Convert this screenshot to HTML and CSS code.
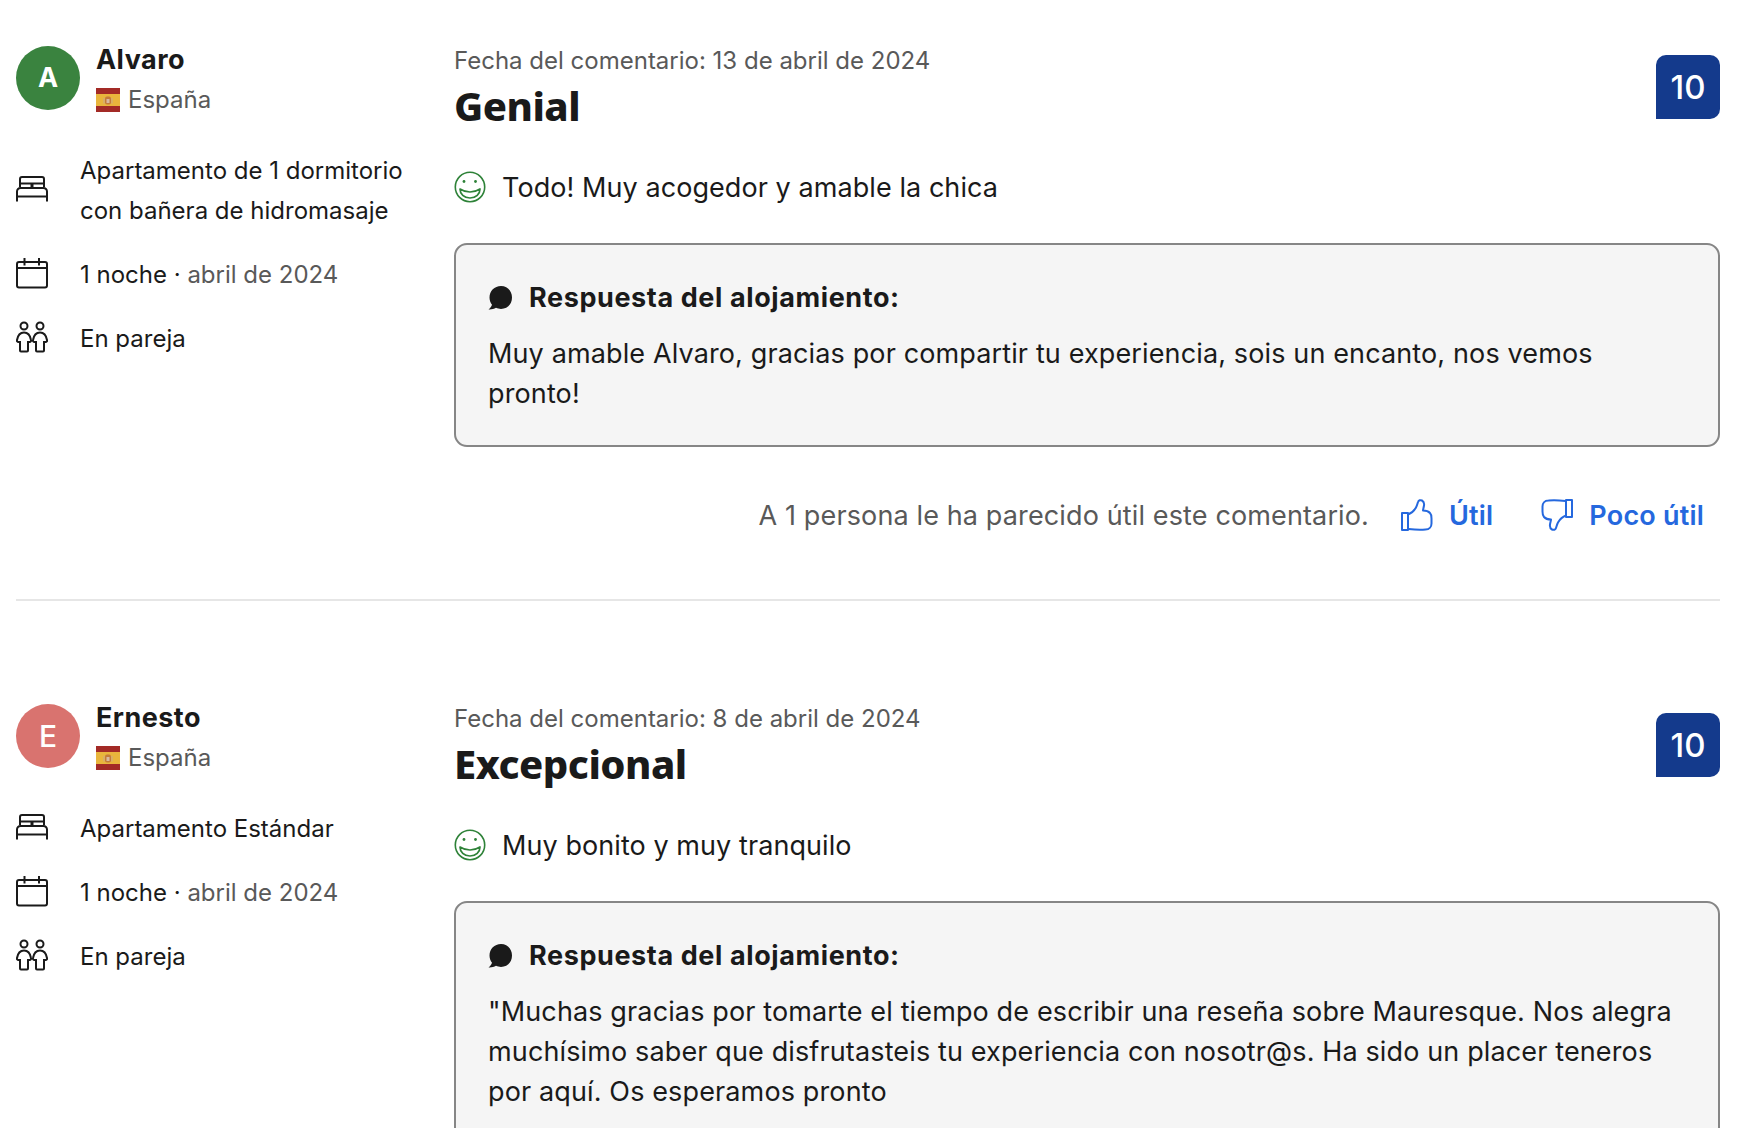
FILE: index.html
```html
<!DOCTYPE html>
<html lang="es">
  <head>
    <meta charset="UTF-8" />
    <meta name="viewport" content="width=device-width, initial-scale=1.0" />
    <title>Comentarios</title>
    <link rel="stylesheet" href="styles.css">
  </head>
  <body>
    <svg class="defs" width="0" height="0">
      <defs>
        <g id="flag-es">
          <rect width="24" height="24" fill="#a32a26" />
          <rect y="6" width="24" height="12" fill="#e9b53c" />
          <rect x="9" y="8.500" width="6" height="8" rx="2" fill="#c47a3a" />
          <rect x="10.500" y="11" width="3" height="4" fill="#d9b9a0" />
          <rect x="7.500" y="10" width="1" height="5.500" fill="#c9a98a" />
          <rect x="15.500" y="10" width="1" height="5.500" fill="#c9a98a" />
        </g>
        <g id="icon-bed" fill="none" stroke="currentColor" stroke-width="2">
          <path d="M4 14V6a2 2 0 0 1 2-2h20a2 2 0 0 1 2 2v8" />
          <path d="M4 10.500h11.500v3.500M28 10.500H16.500v3.500" />
          <path d="M1 28.500V18.500a3.500 3.500 0 0 1 3.500-3.500h23a3.500 3.500 0 0 1 3.500 3.500v10" />
          <path d="M1 23.500h30" />
        </g>
        <g id="icon-calendar" fill="none" stroke="currentColor" stroke-width="2">
          <rect x="1" y="5" width="30" height="25.500" rx="2" />
          <path d="M1 11h30M8.500 1v7.500M23 1v7.500" />
        </g>
        <g id="icon-people" fill="none" stroke="currentColor" stroke-width="2">
          <circle cx="8" cy="5" r="3.500" />
          <circle cx="24" cy="5" r="3.500" />
          <path d="M4 21v8.500a1 1 0 0 0 1 1h6a1 1 0 0 0 1-1V21h1.500a1.500 1.500 0 0 0 1.500-2c-.8-4.500-3-7.500-7-7.500s-6.200 3-7 7.500a1.500 1.500 0 0 0 1.500 2z" />
          <path d="M20 21v8.500a1 1 0 0 0 1 1h6a1 1 0 0 0 1-1V21h1.500a1.500 1.500 0 0 0 1.500-2c-.8-4.500-3-7.500-7-7.500s-6.200 3-7 7.500a1.500 1.500 0 0 0 1.500 2z" />
        </g>
        <g id="icon-smile" fill="none" stroke="currentColor">
          <circle cx="16" cy="16" r="14.700" stroke-width="1.600" />
          <circle cx="10" cy="10.500" r="1.400" fill="currentColor" stroke="none" />
          <circle cx="21.500" cy="10.500" r="1.400" fill="currentColor" stroke="none" />
          <path d="M6 18c6 4 14 4 20 0 0 5-4 9-10 9S6 23 6 18z" stroke-width="1.700" stroke-linejoin="round" />
        </g>
        <path id="icon-bubble" fill="currentColor" d="M13 0C6.500 0 1.500 5 1.500 11.500c0 2.800 1 5.300 2.500 7.300-.5 1.800-1.800 3.500-3.500 4.700 2.800.2 5.500-.5 7.500-1.700 1.500.7 3.300 1.200 5 1.200 6.400 0 11-5 11-11.500S19.400 0 13 0z" />
        <g id="icon-thumb" fill="none" stroke="currentColor" stroke-width="2" stroke-linejoin="round">
          <rect x="1" y="14" width="6" height="17" />
          <path d="M7 15.500c3-1 6-3.500 8-7 1-1.800 1.500-4 2-5.500.5-1.700 2.500-2.300 4-1.500 1.800 1 2.300 3 2 5-.3 2-1 4-1 5 3.500 0 5.500.8 7 2.500 1.500 1.500 1.500 3.500 1.500 5.500v5c0 3-2 6-6 6-4 .5-9 .5-17-.500" />
        </g>
      </defs>
    </svg>

    <div class="reviews">
      <article class="review">
        <aside class="side">
          <div class="user">
            <div class="avatar avatar-green">A</div>
            <div>
              <div class="user-name">Alvaro</div>
              <div class="user-country">
                <svg class="flag" viewBox="0 0 24 24"><use href="#flag-es" /></svg>
                España
              </div>
            </div>
          </div>
          <ul class="facts">
            <li>
              <svg class="fact-icon" viewBox="0 0 32 32"><use href="#icon-bed" /></svg>
              <span>Apartamento de 1 dormitorio con bañera de hidromasaje</span>
            </li>
            <li>
              <svg class="fact-icon" viewBox="0 0 32 32"><use href="#icon-calendar" /></svg>
              <span>1 noche · <span class="muted">abril de 2024</span></span>
            </li>
            <li>
              <svg class="fact-icon" viewBox="0 0 32 32"><use href="#icon-people" /></svg>
              <span>En pareja</span>
            </li>
          </ul>
        </aside>
        <div class="main">
          <div class="head">
            <div>
              <div class="date">Fecha del comentario: 13 de abril de 2024</div>
              <h3 class="title">Genial</h3>
            </div>
            <div class="score">10</div>
          </div>
          <p class="comment">
            <svg class="smile" viewBox="0 0 32 32"><use href="#icon-smile" /></svg>
            Todo! Muy acogedor y amable la chica
          </p>
          <div class="reply">
            <div class="reply-head">
              <svg class="bubble" viewBox="0 0 25 24"><use href="#icon-bubble" /></svg>
              Respuesta del alojamiento:
            </div>
            <p class="reply-text">Muy amable Alvaro, gracias por compartir tu experiencia, sois un encanto, nos vemos pronto!</p>
          </div>
          <div class="helpful">
            <span class="helpful-text">A 1 persona le ha parecido útil este comentario.</span>
            <button class="vote">
              <svg class="vote-icon" viewBox="0 0 32 32"><use href="#icon-thumb" /></svg>
              Útil
            </button>
            <button class="vote">
              <svg class="vote-icon" viewBox="0 0 32 32"><g transform="rotate(180 16 16)"><use href="#icon-thumb" /></g></svg>
              Poco útil
            </button>
          </div>
        </div>
      </article>

      <article class="review">
        <aside class="side">
          <div class="user">
            <div class="avatar avatar-red">E</div>
            <div>
              <div class="user-name">Ernesto</div>
              <div class="user-country">
                <svg class="flag" viewBox="0 0 24 24"><use href="#flag-es" /></svg>
                España
              </div>
            </div>
          </div>
          <ul class="facts">
            <li>
              <svg class="fact-icon" viewBox="0 0 32 32"><use href="#icon-bed" /></svg>
              <span>Apartamento Estándar</span>
            </li>
            <li>
              <svg class="fact-icon" viewBox="0 0 32 32"><use href="#icon-calendar" /></svg>
              <span>1 noche · <span class="muted">abril de 2024</span></span>
            </li>
            <li>
              <svg class="fact-icon" viewBox="0 0 32 32"><use href="#icon-people" /></svg>
              <span>En pareja</span>
            </li>
          </ul>
        </aside>
        <div class="main">
          <div class="head">
            <div>
              <div class="date">Fecha del comentario: 8 de abril de 2024</div>
              <h3 class="title">Excepcional</h3>
            </div>
            <div class="score">10</div>
          </div>
          <p class="comment">
            <svg class="smile" viewBox="0 0 32 32"><use href="#icon-smile" /></svg>
            Muy bonito y muy tranquilo
          </p>
          <div class="reply">
            <div class="reply-head">
              <svg class="bubble" viewBox="0 0 25 24"><use href="#icon-bubble" /></svg>
              Respuesta del alojamiento:
            </div>
            <p class="reply-text">"Muchas gracias por tomarte el tiempo de escribir una reseña sobre Mauresque. Nos alegra muchísimo saber que disfrutasteis tu experiencia con nosotr@s. Ha sido un placer teneros por aquí. Os esperamos pronto</p>
          </div>
        </div>
      </article>
    </div>
  </body>
</html>
```

FILE: styles.css
```css
html,
body {
  height: 100%;
  margin: 0;
  overflow: hidden;
}
body {
  font-family: "Inter", "Liberation Sans", sans-serif;
  color: #1a1a1a;
  background: #fff;
}
.defs {
  display: block;
  height: 0;
}
.reviews {
  padding: 39px 26px 0 16px;
}
.review {
  display: flex;
  padding-bottom: 62px;
  margin-bottom: 96px;
  border-bottom: 2px solid #e6e6e6;
}
.side {
  flex: 0 0 438px;
}
.user {
  display: flex;
  align-items: center;
  gap: 16px;
}
.avatar {
  display: flex;
  flex: 0 0 64px;
  align-items: center;
  justify-content: center;
  width: 64px;
  height: 64px;
  margin-top: -4px;
  border-radius: 50%;
  color: #fff;
  font-size: 27px;
  font-weight: 700;
}
.avatar-green {
  background: #3a833f;
}
.avatar-red {
  background: #d9736f;
  font-size: 30px;
  font-weight: 500;
}
.user-name {
  padding-top: 1px;
  font-size: 27px;
  font-weight: 700;
  line-height: 40px;
  letter-spacing: 0.45px;
}
.user-country {
  display: flex;
  align-items: center;
  gap: 8px;
  color: #595959;
  font-size: 24px;
  line-height: 40px;
}
.flag {
  width: 24px;
  height: 24px;
}
.facts {
  margin: 31px 0 0;
  padding: 0;
  list-style: none;
  font-size: 24px;
  line-height: 40px;
}
.facts li {
  display: flex;
  align-items: center;
  gap: 32px;
  padding-right: 30px;
  margin-bottom: 24px;
}
.fact-icon {
  flex: 0 0 32px;
  width: 32px;
  height: 32px;
  margin-bottom: 4px;
  color: #1a1a1a;
}
.muted {
  color: #595959;
}
.main {
  flex: 1;
  min-width: 0;
  padding-top: 1px;
}
.head {
  display: flex;
  justify-content: space-between;
  align-items: flex-start;
}
.date {
  padding-top: 1px;
  color: #595959;
  font-size: 24px;
  line-height: 40px;
}
.title {
  margin: -1px 0 0;
  font-family: "Noto Sans", "Open Sans", sans-serif;
  font-size: 40px;
  font-weight: 800;
  line-height: 52px;
  letter-spacing: -0.5px;
}
.score {
  display: flex;
  align-items: center;
  justify-content: center;
  width: 64px;
  height: 64px;
  margin-top: 15px;
  border-radius: 10px 10px 10px 0;
  background: #143a8c;
  color: #fff;
  font-size: 33px;
  font-weight: 500;
}
.comment {
  display: flex;
  align-items: center;
  gap: 16px;
  margin: 35px 0 34px;
  font-size: 27px;
  line-height: 42px;
  letter-spacing: 0.07px;
}
.smile {
  flex: 0 0 32px;
  width: 32px;
  height: 32px;
  margin-bottom: 2px;
  color: #2e8238;
}
.reply {
  padding: 32px 32px 31px;
  border: 2px solid #868686;
  border-radius: 13px;
  background: #f5f5f5;
}
.reply-head {
  display: flex;
  align-items: center;
  gap: 16px;
  font-size: 27px;
  font-weight: 700;
  line-height: 42px;
  letter-spacing: 0.6px;
}
.bubble {
  width: 25px;
  height: 24px;
}
.reply-text {
  margin: 15px 0 0;
  font-size: 27px;
  line-height: 40px;
  letter-spacing: 0.13px;
}
.helpful {
  display: flex;
  justify-content: flex-end;
  align-items: center;
  gap: 16px;
  margin-top: 48px;
  font-size: 27px;
  line-height: 42px;
}
.helpful-text {
  color: #595959;
  letter-spacing: 0.13px;
}
.vote {
  display: flex;
  align-items: center;
  gap: 16px;
  padding: 0 16px;
  border: none;
  background: none;
  color: #2568de;
  font: inherit;
  font-weight: 600;
  letter-spacing: 0.2px;
  cursor: pointer;
}
.vote-icon {
  width: 32px;
  height: 32px;
  margin-bottom: 2px;
}
```
